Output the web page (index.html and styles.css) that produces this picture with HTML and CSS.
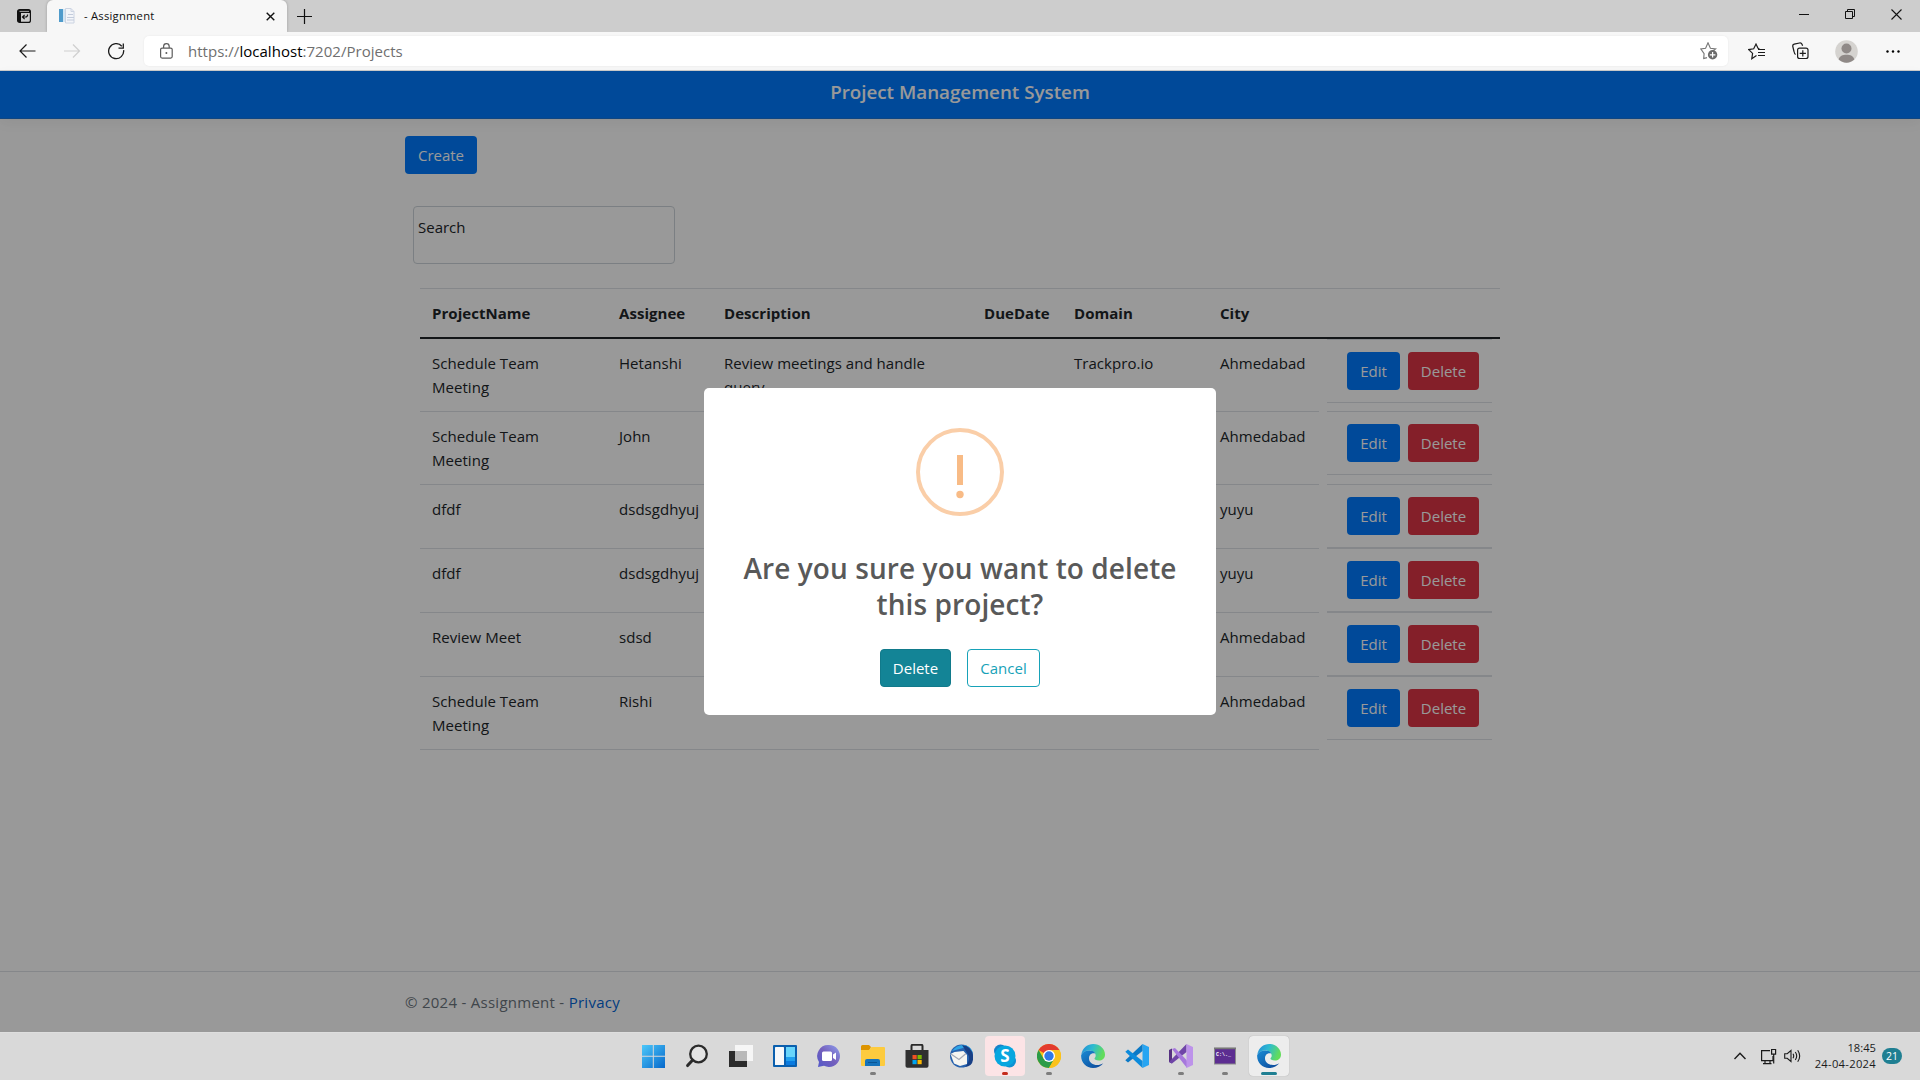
FILE: index.html
```html
<!DOCTYPE html>
<html lang="en">
<head>
<meta charset="utf-8">
<title>- Assignment</title>
<link rel="stylesheet" href="styles.css">
</head>
<body>
<div class="desktop">
  <header class="tabstrip">
    <svg class="tab-actions" width="14" height="14" viewBox="0 0 14 14"><rect x=".6" y=".6" width="12.8" height="12.8" rx="2" fill="none" stroke="#111" stroke-width="1.2"/><path d="M1 1h12v3H4v9H1z" fill="#111"/><path d="M2.5 2.4h9.5" stroke="#cdcdcd" stroke-width=".8"/><path d="M10.5 5.5v1.2L9.400 8H5.500M7.600 5.900L5.500 8l2.100 2.100" fill="none" stroke="#111" stroke-width="1.2"/></svg>
    <div class="tab">
      <svg width="16" height="16" viewBox="0 0 16 16"><rect x="0" y="1" width="4" height="13" fill="#4f9bcb"/><rect x="4" y="1" width="2" height="13" fill="#d3e6f3"/><path d="M6.500 .5H12l3 3V15H6.500z" fill="#f3f5f9" stroke="#ccd4e2"/><path d="M12 .5v3h3" fill="none" stroke="#ccd4e2"/><path d="M9 6.500h5M8 9.500h7M8 12h7" stroke="#c3ccdc"/></svg>
      <span class="tab-title">- Assignment</span>
      <svg class="tab-close" width="9" height="9" viewBox="0 0 9 9"><path d="M.7.7l7.600 7.600M8.300.7L.7 8.300" stroke="#111" stroke-width="1.4"/></svg>
    </div>
    <svg class="new-tab" width="15" height="15" viewBox="0 0 15 15"><path d="M7.500 0v15M0 7.500h15" stroke="#111" stroke-width="1.200"/></svg>
    <div class="window-controls">
      <svg width="10" height="10" viewBox="0 0 10 10"><path d="M0 5.500h10" stroke="#111"/></svg>
      <svg width="10" height="10" viewBox="0 0 10 10"><path d="M.5 2.500h7v7h-7zM2.500 2.500v-2h7v7h-2" fill="none" stroke="#111"/></svg>
      <svg width="11" height="11" viewBox="0 0 11 11"><path d="M.5.5l10 10M10.500.5l-10 10" stroke="#111" stroke-width="1.100"/></svg>
    </div>
  </header>

  <div class="toolbar">
    <svg class="nav-back" width="17" height="14" viewBox="0 0 17 14"><path d="M16.500 7H1M7.500.500L1 7l6.500 6.500" fill="none" stroke="#1b1b1b" stroke-width="1.200"/></svg>
    <svg class="nav-forward" width="17" height="14" viewBox="0 0 17 14"><path d="M0 7h15.500M9 .5L15.500 7 9 13.500" fill="none" stroke="#cfcfcf" stroke-width="1.200"/></svg>
    <svg class="nav-reload" width="17" height="17" viewBox="0 0 17 17"><path d="M15.600 7.200A7.500 7.500 0 1 1 13.800 3.200M15.300.500v4.600h-4.800" fill="none" stroke="#1b1b1b" stroke-width="1.300"/></svg>
    <div class="address">
      <svg width="13" height="16" viewBox="0 0 13 16"><rect x=".6" y="5.100" width="11.600" height="10" rx="1.500" fill="none" stroke="#5c5c5c" stroke-width="1.200"/><path d="M3.600 5V3.500a2.800 2.800 0 0 1 5.600 0V5" fill="none" stroke="#5c5c5c" stroke-width="1.200"/><circle cx="6.400" cy="10" r="1" fill="#5c5c5c"/></svg>
      <span class="url">https://<b>localhost</b>:7202/Projects</span>
      <svg class="fav-add" width="18" height="18" viewBox="0 0 18 18"><path d="M7 16.200l-3.300 1 .4-5L.8 7.500l4.800-.7L8 1.400l2.400 5.400 5.200.7-2.400 1.800" transform="translate(0 -.6)" fill="none" stroke="#767676" stroke-width="1.100"/><circle cx="12.600" cy="12.800" r="4.700" fill="#6b6b6b"/><path d="M12.600 10v5.600M9.800 12.800h5.600" stroke="#fff" stroke-width="1.200"/></svg>
    </div>
    <svg class="favorites" width="17" height="17" viewBox="0 0 17 17"><path d="M8.500 12.500l-4.700 3.200.8-5.300L.8 6.600l4.900-.8L8 1.100l2 4.200 1.400.3" fill="none" stroke="#1b1b1b" stroke-width="1.200"/><path d="M10 6.500h7M10 9.500h7M10 12.500h7" stroke="#1b1b1b" stroke-width="1.200"/></svg>
    <svg class="collections" width="17" height="18" viewBox="0 0 17 18"><path d="M3.600 12.500C2.500 12 2.300 11 2 9.500L.8 4.500C.5 3.200 1 2.500 2.200 2.200L7.500 1c1.300-.3 2 .1 2.500 1.300l.6 1.500" fill="none" stroke="#1b1b1b" stroke-width="1.200"/><rect x="5.600" y="6.100" width="10.400" height="10.400" rx="2" fill="#f7f7f7" stroke="#1b1b1b" stroke-width="1.200"/><path d="M10.800 8.200v6.200M7.700 11.300h6.200" stroke="#1b1b1b" stroke-width="1.200"/></svg>
    <svg class="profile" width="23" height="23" viewBox="0 0 23 23"><circle cx="11.500" cy="11.500" r="11.300" fill="#d5d3d0"/><circle cx="11.500" cy="8.500" r="5" fill="#8f8987"/><path d="M3.700 19.600C4.500 16 7.500 14.800 11.500 14.800s7 1.200 7.800 4.800a11.300 11.300 0 0 1-15.600 0z" fill="#8f8987"/></svg>
    <svg class="more" width="14" height="3" viewBox="0 0 14 3"><circle cx="1.500" cy="1.500" r="1.200"/><circle cx="7" cy="1.500" r="1.200"/><circle cx="12.500" cy="1.500" r="1.200"/></svg>
  </div>

  <div class="viewport">
    <nav class="navbar"><span class="brand">Project Management System</span></nav>
    <main class="container">
      <button class="btn btn-primary create">Create</button>
      <div class="search">Search</div>
      <div class="projects">
        <div class="row head"><span>ProjectName</span><span>Assignee</span><span>Description</span><span>DueDate</span><span>Domain</span><span>City</span></div>
        <div class="row tall first">
          <span>Schedule Team<br>Meeting</span><span>Hetanshi</span><span>Review meetings and handle<br>query</span><span></span><span>Trackpro.io</span><span>Ahmedabad</span>
          <div class="actions"><div class="actions-box"><button class="btn btn-primary edit">Edit</button><button class="btn btn-danger">Delete</button></div></div>
        </div>
        <div class="row tall">
          <span>Schedule Team<br>Meeting</span><span>John</span><span></span><span></span><span></span><span>Ahmedabad</span>
          <div class="actions"><div class="actions-box"><button class="btn btn-primary edit">Edit</button><button class="btn btn-danger">Delete</button></div></div>
        </div>
        <div class="row">
          <span>dfdf</span><span>dsdsgdhyuj</span><span></span><span></span><span></span><span>yuyu</span>
          <div class="actions"><div class="actions-box"><button class="btn btn-primary edit">Edit</button><button class="btn btn-danger">Delete</button></div></div>
        </div>
        <div class="row">
          <span>dfdf</span><span>dsdsgdhyuj</span><span></span><span></span><span></span><span>yuyu</span>
          <div class="actions"><div class="actions-box"><button class="btn btn-primary edit">Edit</button><button class="btn btn-danger">Delete</button></div></div>
        </div>
        <div class="row">
          <span>Review Meet</span><span>sdsd</span><span></span><span></span><span></span><span>Ahmedabad</span>
          <div class="actions"><div class="actions-box"><button class="btn btn-primary edit">Edit</button><button class="btn btn-danger">Delete</button></div></div>
        </div>
        <div class="row tall last">
          <span>Schedule Team<br>Meeting</span><span>Rishi</span><span></span><span></span><span></span><span>Ahmedabad</span>
          <div class="actions"><div class="actions-box"><button class="btn btn-primary edit">Edit</button><button class="btn btn-danger">Delete</button></div></div>
        </div>
      </div>
    </main>
    <footer class="footer">© 2024 - Assignment - <a>Privacy</a></footer>
    <div class="backdrop">
      <section class="modal">
        <svg class="warn" width="88" height="88" viewBox="0 0 88 88"><circle cx="44" cy="44" r="42" fill="none" stroke="#facea8" stroke-width="4"/><rect x="41" y="27" width="6" height="30" fill="#f8bb86"/><circle cx="44" cy="66.500" r="3.700" fill="#f8bb86"/></svg>
        <h2>Are you sure you want to delete<br>this project?</h2>
        <div class="modal-actions"><button class="btn btn-info">Delete</button><button class="btn btn-outline">Cancel</button></div>
      </section>
    </div>
  </div>

  <div class="taskbar">
    <div class="apps">
      <div class="app"><svg viewBox="0 0 24 24"><defs><linearGradient id="win" x1="0" y1="0" x2="1" y2="1"><stop offset="0" stop-color="#4cc8fa"/><stop offset="1" stop-color="#0668cb"/></linearGradient></defs><path d="M1 1h10.800v10.800H1zM12.800 1H24v10.800H12.800zM1 12.800h10.800V24H1zM12.800 12.800H24V24H12.800z" fill="url(#win)"/></svg></div>
      <div class="app"><svg viewBox="0 0 24 24"><circle cx="13.500" cy="10" r="8.300" fill="#e4e4e4" stroke="#2b2b2b" stroke-width="2.300"/><path d="M7.700 16L2.600 21.600" stroke="#2b2b2b" stroke-width="3" stroke-linecap="round"/></svg></div>
      <div class="app"><svg viewBox="0 0 24 24"><path d="M0 7h18v16H0z" fill="#2b2b2b"/><path d="M6 1h18v16H6z" fill="#fafafa" fill-opacity=".85"/><path d="M6 7h12v10H6z" fill="#b9b9b9"/></svg></div>
      <div class="app"><svg viewBox="0 0 24 24"><rect width="24" height="22" y="1" rx="1" fill="#0a5fae"/><rect x="2" y="3" width="9" height="18" rx=".6" fill="#f6f8fa"/><rect x="13" y="3" width="9" height="10" fill="#68d5fb"/><rect x="13" y="13" width="9" height="4" fill="#20a0ef"/><rect x="13" y="17" width="9" height="4" fill="#0a7be0"/></svg></div>
      <div class="app"><svg viewBox="0 0 24 24"><defs><linearGradient id="chat" x1="1" y1="0" x2="0" y2="1"><stop offset="0" stop-color="#8fa0ee"/><stop offset=".5" stop-color="#7560bd"/><stop offset="1" stop-color="#5158c9"/></linearGradient></defs><path d="M12 1a11 11 0 1 1-5 20.800L1 23l1-5A11 11 0 0 1 12 1z" fill="url(#chat)"/><rect x="5" y="7.500" width="10" height="9.500" rx="1.500" fill="#fff"/><path d="M16 10.500l3-2v7.500l-3-2z" fill="#fff"/></svg></div>
      <div class="app dot"><svg viewBox="0 0 24 24"><path d="M0 2.500Q0 1 1.500 1H8l2 2-2 4H0z" fill="#dd9400"/><path d="M0 6h8l2.500-3H23q1 0 1 1v17q0 1-1 1H1q-1 0-1-1z" fill="#fdcb3e"/><path d="M4 22v-5q0-2 2-2h11q2 0 2 2v5z" fill="#1673bb"/><path d="M7 18.500h9" stroke="#0a5695"/></svg></div>
      <div class="app"><svg viewBox="0 0 24 24"><path d="M6.500 7V2q0-1.200 1.200-1.200h8.600Q17.500.8 17.500 2v5" fill="none" stroke="#292929" stroke-width="2"/><path d="M.5 6h23v16q0 1.800-1.800 1.800H2.300Q.5 23.800.5 22z" fill="#303030"/><path d="M7.500 11h4.200v4.200H7.500z" fill="#f25022"/><path d="M12.500 11h4.200v4.200h-4.200z" fill="#7fba00"/><path d="M7.500 16h4.200v4.200H7.500z" fill="#00a4ef"/><path d="M12.500 16h4.200v4.200h-4.200z" fill="#ffb900"/></svg></div>
      <div class="app"><svg viewBox="0 0 24 24"><circle cx="12.500" cy="12" r="11.500" fill="#2762ae"/><path d="M3 7Q8 0 16 1q7 2 8 9-4-6-10-6z" fill="#2fa4e6"/><path d="M13 1q10 1 11 11t-8 11q7-8 2-14z" fill="#183f85"/><path d="M1.500 10l4-2 9-1 3.500 4v9l-7 2-6-2.500z" fill="#f6f5f1"/><path d="M2 10l8 5.500 7-6" fill="none" stroke="#a5a9b5" stroke-width="1.200"/></svg></div>
      <div class="app skype dot red"><svg viewBox="0 0 24 24"><circle cx="7.500" cy="7" r="6.500" fill="#1683c9"/><circle cx="16.500" cy="17" r="6.500" fill="#0f91d2"/><circle cx="12" cy="12" r="10.500" fill="#08a6df"/><text x="12" y="18" text-anchor="middle" class="skype-s">S</text></svg></div>
      <div class="app dot"><svg viewBox="0 0 24 24"><circle cx="12" cy="12" r="12" fill="#fbc21b"/><path d="M12 12L1.600 6A12 12 0 0 1 22.400 6z" fill="#e33b2e"/><path d="M1.600 6A12 12 0 0 0 12 24l5.200-9L12 12 6.800 15z" fill="#2b9c48"/><path d="M12 6h10.400A12 12 0 0 1 12 24l5.200-9z" fill="#fbc21b"/><circle cx="12" cy="12" r="6" fill="#fff"/><circle cx="12" cy="12" r="4.700" fill="#3079e8"/></svg></div>
      <div class="app"><svg viewBox="0 0 24 24"><defs><linearGradient id="ea" x1="0" y1="0" x2="1" y2=".3"><stop offset="0" stop-color="#2387d8"/><stop offset=".5" stop-color="#2dbbd0"/><stop offset="1" stop-color="#62dc5b"/></linearGradient><linearGradient id="eb" x1="0" y1="0" x2="1" y2="1"><stop offset="0" stop-color="#1a8bd4"/><stop offset="1" stop-color="#0b4496"/></linearGradient></defs><path id="e1" d="M.3 10.500C1.500 4 6.500 0 12.300 0 19 0 24 5 24 10.500c0 4-3 6-6 6-3.200 0-4.500-1.200-4.500-2 0-.6 1.200-1.200 1.200-3C14.700 9 12 6.600 8.500 6.600 4.500 6.600 1.500 8.500.3 10.500z" fill="url(#ea)"/><path id="e2" d="M.2 11C1.500 8 4.800 6.600 8.500 6.600c3 0 5 1.200 5.800 3C10.500 8.500 8 11 8 14.500c0 4 4 6.500 8 6.500 2.500 0 4.500-.7 6.300-1.800C20 22.200 16.200 24 12 24 5 24-.5 18 .2 11z" fill="url(#eb)"/></svg></div>
      <div class="app"><svg viewBox="0 0 24 24"><path d="M17.500 0L24 3v18l-6.500 3z" fill="#27a5f2"/><path d="M17.500 0v7L3 18.500.3 16.300z" fill="#0b79c6"/><path d="M17.500 24v-7L3 5.500.3 7.700z" fill="#0c8bdc"/></svg></div>
      <div class="app dot"><svg viewBox="0 0 24 24"><path d="M0 6l3-1.500V19.500L0 18z" fill="#563181"/><path d="M17.500 0v8L3 19.500 0 18z" fill="#6f45a7"/><path d="M3 5l3-1 12 12.500V24z" fill="#a678dc"/><path d="M17.500 0L24 3v18l-6.500 3z" fill="#bd93ea"/></svg></div>
      <div class="app dot"><svg viewBox="0 0 24 24"><rect x="1.500" y="4" width="21" height="16" fill="#5c2d91" stroke="#8b8b8b"/><path d="M1 4.500h22" stroke="#777" stroke-width="1.500"/><text x="3" y="11.500" class="cmd">C:\._</text></svg></div>
      <div class="app active"><svg viewBox="0 0 24 24"><use href="#e1"/><use href="#e2"/></svg></div>
    </div>
    <div class="tray">
      <svg class="chev" width="12" height="8" viewBox="0 0 12 8"><path d="M.5 7L6 1.300 11.500 7" fill="none" stroke="#1b1b1b" stroke-width="1.400"/></svg>
      <svg class="net" width="17" height="17" viewBox="0 0 17 17"><path d="M10 2.600H1.600v10H13V8M5 12.600v2.500M10 12.600v2.500M3 15.600h8.500" fill="none" stroke="#1b1b1b" stroke-width="1.200"/><path d="M11.600 1.500h4v4.600h-4zM13.700 6v9.500" fill="none" stroke="#1b1b1b" stroke-width="1.200"/></svg>
      <svg class="vol" width="17" height="14" viewBox="0 0 17 14"><path d="M.7 4.700h2.500L7 1.500v11L3.200 9.300H.7z" fill="none" stroke="#1b1b1b" stroke-width="1.100"/><path d="M9 4.800q1.400 2.200 0 4.400M11.300 3q2.800 4 0 8M13.700 1.200q4 5.800 0 11.600" fill="none" stroke="#1b1b1b" stroke-width="1.100"/></svg>
      <div class="clock"><span>18:45</span><span class="date">24-04-2024</span></div>
      <div class="count">21</div>
    </div>
  </div>
</div>
</body>
</html>
```

FILE: styles.css
```css
* { box-sizing: border-box; }
body { margin: 0; font-family: "Open Sans", "Noto Sans", sans-serif; font-size: 15px; line-height: 24px; color: #212529; }
svg { display: block; flex: none; }
button { font: inherit; }

.desktop { width: 1920px; height: 1080px; display: flex; flex-direction: column; overflow: hidden; }

.tabstrip { height: 32px; background: #cdcdcd; display: flex; align-items: center; flex: none; }
.tab-actions { margin: 0 16px 0 17px; }
.tab { width: 240px; height: 32px; background: #f7f7f7; border-radius: 6px 6px 0 0; display: flex; align-items: center; padding: 0 12px; box-shadow: 0 0 3px rgba(0,0,0,.25); clip-path: inset(0 -4px 0 -4px); }
.tab-title { font-size: 11.200px; letter-spacing: .25px; margin-left: 9px; color: #111; }
.tab-close { margin-left: auto; }
.new-tab { margin-left: 10px; }
.window-controls { display: flex; gap: 36px; margin: -4px 18px 0 auto; align-items: center; }

.toolbar { height: 39px; flex: none; background: #f7f7f7; border-bottom: 1px solid #cbcbcb; display: flex; align-items: center; padding-left: 19px; }
.nav-forward { margin-left: 28px; }
.nav-reload { margin: 0 19px 0 27px; }
.address { width: 1584px; height: 30px; background: #fff; border-radius: 5px; box-shadow: 0 0 2px rgba(0,0,0,.08); display: flex; align-items: center; padding: 0 10px 0 16px; }
.url { margin-left: 15px; color: #6f6f6f; font-size: 15px; letter-spacing: .03px; white-space: pre; }
.url b { font-weight: 400; color: #000; }
.fav-add { margin-left: auto; }
.favorites { margin-left: 20px; }
.collections { margin-left: 27px; }
.profile { margin-left: 26px; }
.more { margin-left: 28px; }

.viewport { position: relative; flex: 1; background: #fff; display: flex; flex-direction: column; }
.navbar { height: 48px; flex: none; background: #007bff; display: flex; justify-content: center; padding-top: 6px; box-shadow: 0 4px 12px rgba(0,0,0,.05); border-bottom: 1px solid #1b76d8; }
.brand { color: #fff; font-size: 18.800px; font-weight: 600; line-height: 30px; }
.container { width: 1110px; margin: 0 auto; flex: 1; padding-top: 17px; }
.btn { display: block; height: 38px; padding: 0; border: 1px solid transparent; border-radius: 4px; color: #fff; font-size: 15px; line-height: 24px; text-align: center; }
.btn-primary { background: #007bff; }
.btn-danger { background: #dc3545; width: 71px; }
.btn-info { background: #138496; border-color: #117a8b; width: 71px; }
.btn-outline { background: #fff; border-color: #17a2b8; color: #17a2b8; width: 73px; }
.create { width: 72px; }
.edit { width: 53px; }
.search { width: 262px; height: 58px; margin: 32px 0 24px 8px; border: 1px solid #ced4da; border-radius: 4px; padding: 8px 4px; }

.projects { width: 1080px; margin-left: 15px; }
.row { display: grid; grid-template-columns: 187px 105px 260px 90px 146px 111px 181px; height: 64px; letter-spacing: .04px; }
.row > span { padding: 12px 0 0 12px; border-top: 1px solid #dee2e6; white-space: nowrap; }
.row.tall { height: 73px; }
.row.first { height: 72px; }
.row.first > span { border-top: 0; }
.row.last { height: 74px; }
.row.last > span { border-bottom: 1px solid #dee2e6; }
.head { height: 51px; border-top: 1px solid #dee2e6; border-bottom: 2px solid #212529; font-weight: 700; }
.head > span { border-top: 0; }
.actions { padding: 0 8px; }
.actions-box { height: 64px; border: solid #dee2e6; border-width: 1px 0; display: flex; gap: 8px; padding: 12px 0 0 20px; }

.footer { height: 61px; flex: none; border-top: 1px solid #dee2e6; color: #6c757d; line-height: 60px; padding-left: 405px; letter-spacing: .27px; }
.footer a { color: #0366d6; }

.backdrop { position: absolute; inset: 0; background: rgba(0,0,0,.4); display: flex; justify-content: center; align-items: flex-start; padding-top: 317px; }
.modal { width: 512px; height: 327px; background: #fff; border-radius: 5px; display: flex; flex-direction: column; align-items: center; padding-top: 40px; }
.modal h2 { margin: 34px 0 0; font-size: 28px; line-height: 36px; font-weight: 600; color: #595959; letter-spacing: .08px; text-align: center; white-space: nowrap; }
.modal-actions { display: flex; gap: 16px; margin-top: 27px; }

.taskbar { height: 48px; flex: none; background: #d9d9d9; border-top: 1px solid #dedede; display: grid; grid-template-columns: 1fr auto 1fr; }
.apps { grid-column: 2; display: flex; gap: 4px; align-items: flex-start; padding: 3px 0 0 2px; }
.app { width: 40px; height: 40px; display: flex; align-items: center; justify-content: center; border-radius: 4px; position: relative; }
.app svg { width: 24px; height: 24px; }
.dot::after { content: ""; position: absolute; left: 17px; bottom: 1px; width: 6px; height: 3px; border-radius: 2px; background: #7d7d7d; }
.skype { background: #fce4e6; }
.app.red::after { background: #c42b1c; }
.active { background: #ededed; box-shadow: 0 0 1px rgba(0,0,0,.3); }
.active::after { content: ""; position: absolute; left: 12px; bottom: 1px; width: 16px; height: 3px; border-radius: 2px; background: #1f7f92; }
.skype-s { font: 700 17px "Open Sans", sans-serif; fill: #fff; }
.cmd { font: 700 5px "Liberation Mono", monospace; fill: #fff; }
.tray { display: flex; align-items: center; justify-content: flex-end; padding: 0 18px 1px 0; }
.net { margin-left: 14px; }
.vol { margin-left: 7px; }
.clock { display: flex; flex-direction: column; align-items: flex-end; margin-left: 14px; font-size: 11.200px; line-height: 16px; color: #1b1b1b; }
.date { letter-spacing: .3px; }
.count { width: 20px; height: 16px; border-radius: 8px; background: #1f7f92; color: #fff; font-size: 10.500px; line-height: 16px; text-align: center; margin-left: 6px; }
```
